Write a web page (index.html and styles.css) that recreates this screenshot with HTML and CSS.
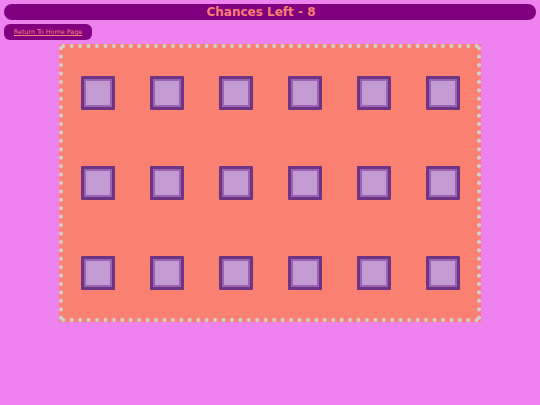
FILE: index.html
```html
<!DOCTYPE html>
<html>
	<head>
		<meta charset="utf-8">
		<title>Memory Game</title>
		<link rel="stylesheet" href="styles.css">
	</head>
	<body>
		<h1 class="chances">Chances Left - 8</h1>
		<div class="home"><a href="#">Return To Home Page</a></div>
		<div id="board">
			<div class="cell"><div class="card"></div></div>
			<div class="cell"><div class="card"></div></div>
			<div class="cell"><div class="card"></div></div>
			<div class="cell"><div class="card"></div></div>
			<div class="cell"><div class="card"></div></div>
			<div class="cell"><div class="card"></div></div>
			<div class="cell"><div class="card"></div></div>
			<div class="cell"><div class="card"></div></div>
			<div class="cell"><div class="card"></div></div>
			<div class="cell"><div class="card"></div></div>
			<div class="cell"><div class="card"></div></div>
			<div class="cell"><div class="card"></div></div>
			<div class="cell"><div class="card"></div></div>
			<div class="cell"><div class="card"></div></div>
			<div class="cell"><div class="card"></div></div>
			<div class="cell"><div class="card"></div></div>
			<div class="cell"><div class="card"></div></div>
			<div class="cell"><div class="card"></div></div>
		</div>
	</body>
</html>
```

FILE: styles.css
```css
*{
	margin: 0;
	padding: 0;
}

body{
	background: violet;
	padding: 4px;
	font-family: "DejaVu Sans", Verdana, sans-serif;
}

.chances{
	height: 16px;
	line-height: 16px;
	background: purple;
	color: salmon;
	font-size: 12px;
	font-weight: bold;
	text-align: center;
	padding-right: 18px;
	border-radius: 8px;
}

.home{
	width: 88px;
	height: 16px;
	line-height: 16px;
	margin-top: 4px;
	background: purple;
	border-radius: 6px;
	text-align: center;
	font-size: 6.4px;
}
.home a{
	color: salmon;
}

/* dotted frame drawn with gradients so the dots keep an 8px pitch */
#board{
	width: 414px;
	margin: 4px auto 0;
	border: 4px solid transparent;
	background-color: salmon;
	background-image:
		radial-gradient(circle, #d0d0d0 1.7px, transparent 2.2px),
		radial-gradient(circle, #d0d0d0 1.7px, transparent 2.2px),
		radial-gradient(circle, #d0d0d0 1.7px, transparent 2.2px),
		radial-gradient(circle, #d0d0d0 1.7px, transparent 2.2px);
	background-size: 8.4px 4px, 8.4px 4px, 4px 8.4px, 4px 8.4px;
	background-position: 0 0, 0 100%, 0 0, 100% 0;
	background-repeat: round no-repeat, round no-repeat, no-repeat round, no-repeat round;
	background-origin: border-box;
	display: grid;
	grid-template-columns: repeat(6, 69px);
	grid-template-rows: repeat(3, 90px);
}

.cell{
	display: flex;
	align-items: center;
	justify-content: center;
}

.card{
	width: 28px;
	height: 28px;
	background: #c39bd3;
	border: 3px solid #6c3483;
	box-shadow: inset 0 0 0 2px #9b62b3;
	border-radius: 1px;
}
```
